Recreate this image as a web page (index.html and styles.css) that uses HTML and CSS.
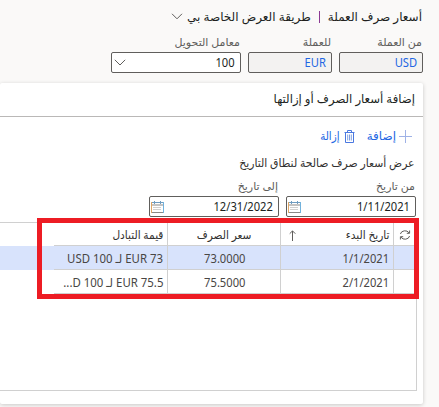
FILE: index.html
```html
<!DOCTYPE html>
<html lang="ar" dir="rtl">
<head>
<meta charset="utf-8">
<title>أسعار صرف العملة</title>
<link rel="stylesheet" href="styles.css">
</head>
<body>
<header class="page-title">
  <span class="title-text">أسعار صرف العملة</span>
  <span class="separator"></span>
  <span class="title-text view-name">طريقة العرض الخاصة بي</span>
  <svg class="chevron" width="12" height="7" viewBox="0 0 12 7"><path d="M1 .8 6 5.8 11 .8"/></svg>
</header>
<section class="filters">
  <div class="field currency"><label>من العملة</label><div class="input readonly"><span>USD</span></div></div>
  <div class="field currency"><label>للعملة</label><div class="input readonly"><span>EUR</span></div></div>
  <div class="field factor"><label>معامل التحويل</label><div class="input"><span>100</span><svg class="chevron" width="12" height="7" viewBox="0 0 12 7"><path d="M.8 .8 6 6 11.2 .8"/></svg></div></div>
</section>
<main class="card">
  <h2><span>إضافة أسعار الصرف أو إزالتها</span></h2>
  <div class="toolbar">
    <svg class="tool-icon plus" width="13" height="13" viewBox="0 0 13 13"><path d="M6.5 0v13M0 6.5h13"/></svg>
    <span class="add">إضافة</span>
    <svg class="tool-icon" width="11" height="13" viewBox="0 0 11 13"><path d="M.5 2.5h10M3.5 2.5v-2h4v2M1.5 2.5v10h8v-10"/><path class="slats" d="M3.7 4.5v6M5.5 4.5v6M7.3 4.5v6"/></svg>
    <span class="remove">إزالة</span>
  </div>
  <p class="hint"><span>عرض أسعار صرف صالحة لنطاق التاريخ</span></p>
  <div class="dates">
    <div class="field date"><label>من تاريخ</label><div class="input"><span>1/11/2021</span><svg class="calendar" width="13" height="12" viewBox="0 0 13 12"><path class="left" d="M.5 1v11"/><path class="right" d="M12.5 1v11"/><path class="top" d="M1 1.5h11M3.5 0v3M9.5 0v3"/><path d="M1 4h11M1 11.5h11"/><path class="days" d="M2.5 6.5h8M2.5 8.5h8"/></svg></div></div>
    <div class="field date"><label>إلى تاريخ</label><div class="input"><span>12/31/2022</span><svg class="calendar" width="13" height="12" viewBox="0 0 13 12"><path class="left" d="M.5 1v11"/><path class="right" d="M12.5 1v11"/><path class="top" d="M1 1.5h11M3.5 0v3M9.5 0v3"/><path d="M1 4h11M1 11.5h11"/><path class="days" d="M2.5 6.5h8M2.5 8.5h8"/></svg></div></div>
  </div>
  <div class="grid">
    <div class="row head">
      <div class="cell mark"><svg class="refresh" width="12" height="12" viewBox="0 0 12 12"><path d="M1.4 5A4.7 4.2 0 0 1 10 3.8M10.6 7A4.7 4.2 0 0 1 2 8.2M10.6 1.5V4.3H7.8M1.4 10.5V7.7H4.2"/></svg></div>
      <div class="cell start"><span>تاريخ البدء</span><svg class="sort" width="7" height="11" viewBox="0 0 7 11"><path d="M3.5 11V1M.7 3.7 3.5 .9 6.3 3.7"/></svg></div>
      <div class="cell rate"><span>سعر الصرف</span></div>
      <div class="cell value"><span>قيمة التبادل</span></div>
    </div>
    <div class="row selected">
      <div class="cell mark"></div><div class="cell start"><span>1/1/2021</span></div><div class="cell rate"><span>73.0000</span></div><div class="cell value"><span>EUR 73 لـ USD 100</span></div>
    </div>
    <div class="row">
      <div class="cell mark"></div><div class="cell start"><span>2/1/2021</span></div><div class="cell rate"><span>75.5000</span></div><div class="cell value"><span>EUR 75.5 لـ D 100...</span></div>
    </div>
  </div>
  <div class="highlight"></div>
</main>
</body>
</html>
```

FILE: styles.css
```css
* { box-sizing: border-box; }
body {
  margin: 0;
  width: 439px;
  height: 407px;
  overflow: hidden;
  background: #faf9f8;
  color: #201f1e;
  font: 12px/16px "Noto Sans", "Open Sans", "DejaVu Sans", sans-serif;
  white-space: nowrap;
}
svg { display: block; fill: none; flex: none; }
.page-title {
  display: flex;
  align-items: center;
  height: 34px;
  padding-right: 17px;
  font-size: 12px;
}
.separator { width: 1px; height: 12px; margin: 0 8px; background: #8b3a94; }
.chevron { stroke: #605e5c; stroke-width: 1; }
.page-title .chevron { margin-right: 4px; margin-top: -2px; }
.filters { display: flex; gap: 7px; height: 49px; padding-right: 16px; }
.field { flex: none; }
.field label { display: block; height: 18px; color: #605e5c; padding-right: 1px; font-size: 11px; }
.currency { width: 84px; }
.factor, .date { width: 130px; }
.input {
  display: flex;
  align-items: center;
  justify-content: space-between;
  height: 21px;
  padding: 0 5px;
  border: 1px solid #605e5c;
  border-radius: 2px;
  background: #fff;
  color: #201f1e;
}
.input span, .cell span, h2 span, .hint span, .remove {
  display: inline-block;
  transform: scaleX(.93);
  transform-origin: right center;
}
.factor .input { padding-left: 2px; }
.date .input { padding-left: 1px; }
.readonly { background: #f3f2f1; color: #2266e3; }
.card {
  position: relative;
  width: 423px;
  height: 321px;
  margin-right: 16px;
  background: #fff;
  border-radius: 2px;
  box-shadow: 0 1px 4px rgba(0, 0, 0, .2);
}
h2 {
  height: 34px;
  margin: 0;
  padding: 7px 8px 0 0;
  border-bottom: 1px solid #bab8b7;
  font-size: 12px;
  line-height: 18px;
  font-weight: 400;
}
h2 span { transform: scaleX(.975); }
.toolbar {
  display: flex;
  align-items: center;
  height: 38px;
  padding-right: 11px;
  color: #2266e3;
}
.tool-icon { stroke: #4a78e0; stroke-width: 1; }
.slats { stroke: #7f9fe0; }
.plus { stroke: #9fb2e6; }
.add { margin: 0 3px 0 12px; }
.toolbar .remove { margin-right: 4px; transform: scaleX(.86); }
.hint { height: 23px; margin: 0; padding-right: 8px; color: #323130; font-size: 11.5px; }
.hint span { transform: scaleX(.94); }
.dates { display: flex; gap: 7px; height: 44px; padding-right: 7px; }
.calendar { stroke: #8a8886; }
.calendar .left { stroke: #dfa765; }
.calendar .right { stroke: #72b2dc; }
.calendar .top { stroke: #6f9cc0; }
.calendar .days { stroke: #a3a19f; stroke-dasharray: 1 1; }
.grid {
  width: 417px;
  height: 169px;
  margin-right: 6px;
  border: solid #d0d0d0;
  border-width: 1px 1px 1px 0;
}
.row { display: flex; height: 24px; color: #484644; }
.head { height: 23px; color: #323130; }
.selected { background: #d8e3fc; }
.cell {
  display: flex;
  align-items: center;
  justify-content: space-between;
  width: 113px;
  padding: 2px 4px 0 0;
  border-bottom: 1px solid #d0d0d0;
  border-left: 1px solid #d0d0d0;
}
.head .cell { font-size: 11.5px; }
.value span { transform: scaleX(.95); }
.head .cell span { transform: scaleX(.92); }
.mark { width: 23px; padding-right: 5px; }
.rate { padding-right: 35px; }
.head .rate { padding-right: 29px; }
.value { border-left: 0; }
.start { padding-left: 8px; }
.refresh, .sort { stroke: #605e5c; }
.highlight {
  position: absolute;
  top: 135px;
  left: 37px;
  width: 382px;
  height: 81px;
  border: 5px solid #ed1c24;
}
```
